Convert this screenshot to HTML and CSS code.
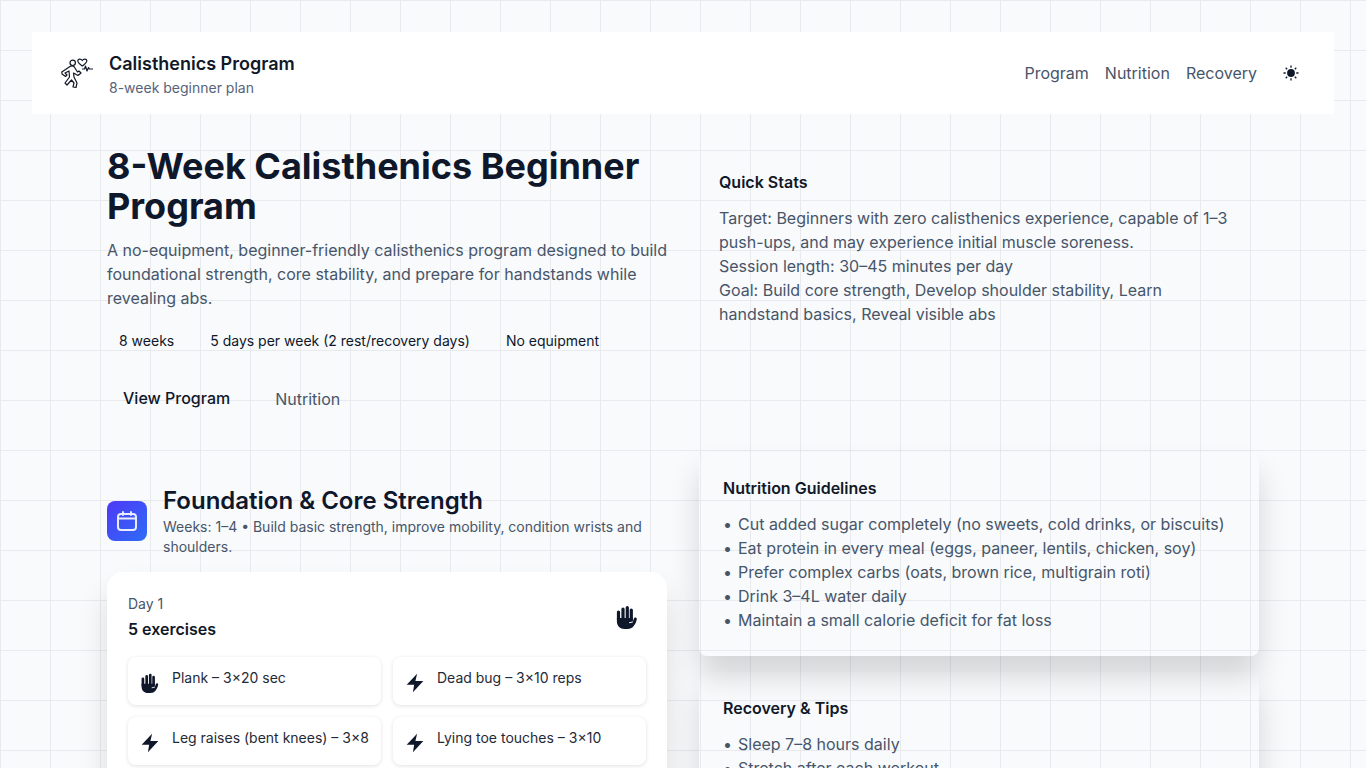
FILE: index.html
```html
<!DOCTYPE html>
<html lang="en">
<head>
<meta charset="utf-8">
<title>Calisthenics Program</title>
<link rel="stylesheet" href="styles.css">
</head>
<body>
<svg class="sprite" width="0" height="0" aria-hidden="true">
  <symbol id="hand" viewBox="0 0 24 24">
    <path d="M3.500 7v8M8 4v9M12.300 2.500v10.500M16.300 5v9" fill="none" stroke="currentColor" stroke-width="3.200" stroke-linecap="round"/>
    <path d="M1.900 13h16v3.500l1-3c.600-1.800 3.200-1.200 2.900.7-.500 2.800-1.800 5.300-3.300 7.100-1.400 1.800-3.400 2.700-6 2.700h-3c-4.500 0-7.600-3-7.600-7.500Z" fill="currentColor"/>
    <path d="M14.500 17.700l3-.7" fill="none" stroke="#fff" stroke-width="1" stroke-linecap="round"/>
  </symbol>
  <symbol id="bolt" viewBox="0 0 24 24">
    <path d="M14.500 1 2 14h9l-1.500 9L22 9.500h-9.500l2-8.500Z" fill="currentColor"/>
  </symbol>
</svg>
<header class="site-header">
  <div class="brand">
    <svg class="logo" viewBox="0 0 32 32" fill="none" stroke="#111827" stroke-width="1.200" stroke-linecap="round" stroke-linejoin="round" aria-hidden="true">
      <circle cx="11.700" cy="4.800" r="2.700"/>
      <path d="M9 8.500.8 14 1 16l3.500 2.500L6 17l-2-2 4-2 .5 6L4 25l2 2 4.500-5 2.500 3-1 4 3 .5 1-4.500-3-6-.5-4 4.500 2.500 3-2.500-2-2-1.500 1L13 8.500c-1.200-.8-2.800-.8-4 0Z"/>
      <path d="M21.300 8c-2.300-1.800-4.800-3.300-4.500-5.300.3-1.800 3-2.200 4.500-.2 1.500-2 4.200-1.600 4.500.2.300 2-2.200 3.500-4.500 5.300Z"/>
      <path d="M21.500 11h2l1-3 1.500 5 1.500-3.500.8 1.500h3.200"/>
    </svg>
    <div>
      <div class="brand-title">Calisthenics Program</div>
      <div class="brand-sub">8-week beginner plan</div>
    </div>
  </div>
  <nav class="nav">
    <a>Program</a>
    <a>Nutrition</a>
    <a>Recovery</a>
    <svg class="sun" viewBox="0 0 16 16" aria-hidden="true">
      <circle cx="8" cy="8" r="3.900" fill="#0f172a"/>
      <path d="M8 .5v2.200M8 13.300v2.200M.5 8h2.200M13.300 8h2.200M2.700 2.700l1.500 1.500M11.800 11.800l1.500 1.500M2.700 13.300l1.500-1.500M11.800 4.200l1.500-1.500" stroke="#0f172a" stroke-width="1.300" fill="none"/>
    </svg>
  </nav>
</header>

<main class="wrap">
  <section class="grid hero">
    <div>
      <h1>8-Week Calisthenics Beginner Program</h1>
      <p class="lead">A no-equipment, beginner-friendly calisthenics program designed to build foundational strength, core stability, and prepare for handstands while revealing abs.</p>
      <div class="tags">
        <span>8 weeks</span>
        <span>5 days per week (2 rest/recovery days)</span>
        <span>No equipment</span>
      </div>
      <div class="actions">
        <a class="btn btn-primary">View Program</a>
        <a class="btn">Nutrition</a>
      </div>
    </div>
    <aside class="stats">
      <h3>Quick Stats</h3>
      <div class="stats-body">
        <div>Target: Beginners with zero calisthenics experience, capable of 1–3 push-ups, and may experience initial muscle soreness.</div>
        <div>Session length: 30–45 minutes per day</div>
        <div>Goal: Build core strength, Develop shoulder stability, Learn handstand basics, Reveal visible abs</div>
      </div>
    </aside>
  </section>

  <section class="grid program">
    <div>
      <div class="phase">
        <div class="phase-icon">
          <svg viewBox="0 0 24 24" width="24" height="24" fill="none" stroke="#e8ecff" stroke-width="2" stroke-linecap="round" stroke-linejoin="round" aria-hidden="true">
            <rect x="3" y="5" width="18" height="16" rx="3"/>
            <path d="M3 9.500h18M8 3v3M16 3v3"/>
          </svg>
        </div>
        <div>
          <h2>Foundation &amp; Core Strength</h2>
          <p class="phase-text">Weeks: 1–4 • Build basic strength, improve mobility, condition wrists and shoulders.</p>
        </div>
      </div>
      <article class="day">
        <div class="day-head">
          <div>
            <div class="day-label">Day 1</div>
            <div class="day-count">5 exercises</div>
          </div>
          <svg class="day-glyph"><use href="#hand"/></svg>
        </div>
        <div class="exercises">
          <div class="exercise"><svg class="glyph"><use href="#hand"/></svg><span>Plank – 3×20 sec</span></div>
          <div class="exercise"><svg class="glyph"><use href="#bolt"/></svg><span>Dead bug – 3×10 reps</span></div>
          <div class="exercise"><svg class="glyph"><use href="#bolt"/></svg><span>Leg raises (bent knees) – 3×8</span></div>
          <div class="exercise"><svg class="glyph"><use href="#bolt"/></svg><span>Lying toe touches – 3×10</span></div>
        </div>
      </article>
    </div>
    <div class="side">
      <section class="panel">
        <h3>Nutrition Guidelines</h3>
        <ul>
          <li>Cut added sugar completely (no sweets, cold drinks, or biscuits)</li>
          <li>Eat protein in every meal (eggs, paneer, lentils, chicken, soy)</li>
          <li>Prefer complex carbs (oats, brown rice, multigrain roti)</li>
          <li>Drink 3–4L water daily</li>
          <li>Maintain a small calorie deficit for fat loss</li>
        </ul>
      </section>
      <section class="panel">
        <h3>Recovery &amp; Tips</h3>
        <ul>
          <li>Sleep 7–8 hours daily</li>
          <li>Stretch after each workout</li>
        </ul>
      </section>
    </div>
  </section>
</main>
</body>
</html>
```
FILE: styles.css
```css
* { box-sizing: border-box; }
html { height: 100%; overflow: hidden; }
body {
  margin: 0;
  height: 100%;
  overflow: hidden;
  padding: 32px 32px 0;
  font-family: Inter, "Liberation Sans", sans-serif;
  color: #0f172a;
  background-color: #f8fafc;
  background-image:
    linear-gradient(to right, #e8eaee 1px, transparent 1px),
    linear-gradient(to bottom, #e8eaee 1px, transparent 1px);
  background-size: 50px 50px;
}
h1, h2, h3, p, ul { margin: 0; padding: 0; }
.sprite { position: absolute; }

.site-header {
  height: 82px;
  background: #fff;
  padding: 2px 35px 0 29px;
  display: flex;
  align-items: center;
  justify-content: space-between;
}
.brand { display: flex; align-items: center; gap: 16px; }
.logo { width: 32px; height: 32px; display: block; margin-top: -1px; }
.brand-title { font-size: 18px; line-height: 28px; font-weight: 600; color: #111827; }
.brand-sub { font-size: 14px; line-height: 20px; color: #56647a; }
.nav { display: flex; align-items: center; gap: 16px; font-size: 16px; color: #475569; margin-top: -2px; }
.sun { margin-left: 10px; width: 16px; height: 16px; display: block; }

.wrap { width: 1152px; margin: 0 auto; }
.grid { display: grid; grid-template-columns: 560px 560px; column-gap: 32px; }
.hero { padding-top: 32px; height: 336px; }
h1 { font-size: 36px; line-height: 40px; font-weight: 700; color: #0f172a; }
.lead { margin-top: 12px; font-size: 16px; line-height: 24px; color: #475569; }
.tags { display: flex; gap: 12px; margin-top: 15px; font-size: 14px; line-height: 20px; color: #0f172a; }
.tags span { padding: 6px 12px; }
.actions { display: flex; gap: 12px; margin-top: 18px; font-size: 16px; }
.btn { padding: 12px 16px; line-height: 24px; color: #475569; margin-left: 1px; }
.btn-primary { font-weight: 500; color: #0f172a; margin: -1px 0 0; }
.stats { padding: 20px; margin-top: 4px; }
h3 { font-size: 16px; line-height: 24px; font-weight: 600; color: #111827; }
.stats-body { margin-top: 12px; font-size: 16px; line-height: 24px; color: #475569; }

.program { height: 1000px; align-items: start; }
.phase { display: flex; align-items: center; gap: 16px; padding-top: 35px; }
.phase-icon {
  width: 40px; height: 40px; flex: none; border-radius: 8px;
  background: linear-gradient(135deg, #4f39f6, #2d6cf6);
  display: flex; align-items: center; justify-content: center;
}
h2 { font-size: 24px; line-height: 32px; font-weight: 600; color: #0f172a; }
.phase-text { font-size: 14px; line-height: 20px; color: #475569; }
.day {
  margin-top: 15px; padding: 22px 21px 21px; background: #fff; border-radius: 16px;
  box-shadow: 0 20px 30px rgba(0,0,0,.12);
}
.day-head { display: flex; justify-content: space-between; align-items: center; padding-right: 7px; }
.day-label { font-size: 14px; line-height: 20px; color: #475569; }
.day-count { font-size: 16px; line-height: 24px; font-weight: 600; color: #111827; margin-top: 3px; }
.glyph { width: 20px; height: 20px; color: #0f172a; flex: none; margin-top: 4px; }
.day-glyph { width: 24px; height: 24px; color: #0f172a; flex: none; margin-top: -2px; }
.exercises { display: grid; grid-template-columns: 253px 253px; gap: 12px; margin-top: 16px; }
.exercise {
  height: 48px; padding: 12px; background: #fff; border-radius: 8px;
  display: flex; gap: 12px; font-size: 14px; line-height: 18px; color: #1f2937;
  box-shadow: 0 1px 4px rgba(0,0,0,.12);
}

.side { display: flex; flex-direction: column; gap: 16px; padding-top: 2px; }
.panel {
  padding: 24px;
  border-radius: 8px;
  box-shadow: 0 20px 30px rgba(0,0,0,.15);
  height: 204px;
}
.panel ul { margin-top: 12px; list-style: none; font-size: 16px; line-height: 24px; color: #475569; }
.panel li { display: flex; gap: 6px; }
.panel li::before { content: "•"; }
```
